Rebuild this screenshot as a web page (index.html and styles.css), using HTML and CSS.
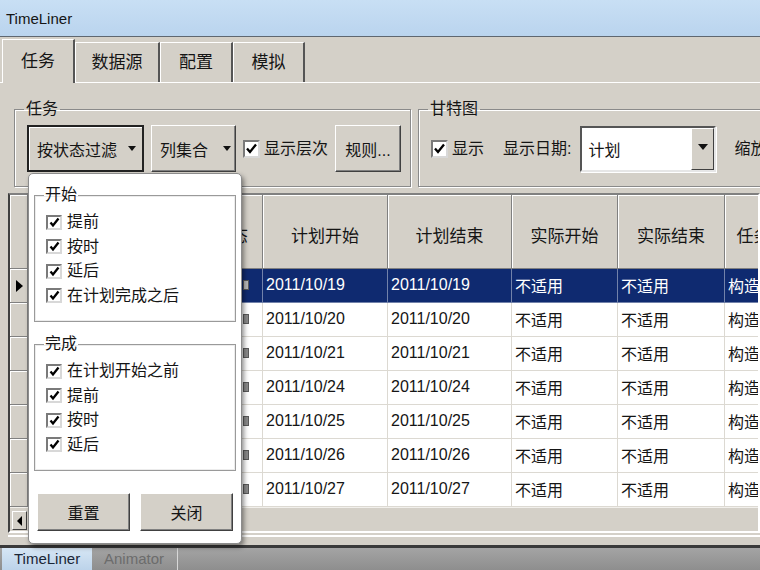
FILE: index.html
```html
<!DOCTYPE html>
<html lang="zh-CN">
<head>
  <meta charset="UTF-8">
  <title>TimeLiner</title>
  <link rel="stylesheet" href="styles.css">
</head>
<body>
<div class="app">
  <div class="titlebar">TimeLiner</div>

  <div class="window">
    <div class="tabs">
      <div class="tab active">任务</div>
      <div class="tab w85">数据源</div>
      <div class="tab">配置</div>
      <div class="tab w72">模拟</div>
    </div>

    <div class="page">
      <div class="toolbar">
        <fieldset class="group group-task">
          <legend>任务</legend>
          <button class="btn btn-filter pressed">按状态过滤<span class="arrow"></span></button>
          <button class="btn btn-columns">列集合<span class="arrow"></span></button>
          <label class="check big"><span class="box"><svg viewBox="0 0 13 13"><path d="M2 6.5 L5 10 L11 2.5"/></svg></span>显示层次</label>
          <button class="btn btn-rules">规则...</button>
        </fieldset>
        <fieldset class="group group-gantt">
          <legend>甘特图</legend>
          <label class="check big"><span class="box"><svg viewBox="0 0 13 13"><path d="M2 6.5 L5 10 L11 2.5"/></svg></span>显示</label>
          <span class="field-label">显示日期:</span>
          <div class="select">计划<span class="select-btn"><span class="arrow"></span></span></div>
          <span class="field-label zoom">缩放</span>
        </fieldset>
      </div>

      <div class="grid">
        <div class="row head">
          <div class="sel"></div>
          <div class="cell">名称</div>
          <div class="cell">状态</div>
          <div class="cell">计划开始</div>
          <div class="cell">计划结束</div>
          <div class="cell">实际开始</div>
          <div class="cell">实际结束</div>
          <div class="cell">任务类型</div>
        </div>
        <div class="row selected">
          <div class="sel"><span class="pointer"></span></div>
          <div class="cell">基础 1</div>
          <div class="cell status"><span class="icon"></span></div>
          <div class="cell">2011/10/19</div>
          <div class="cell">2011/10/19</div>
          <div class="cell">不适用</div>
          <div class="cell">不适用</div>
          <div class="cell">构造</div>
        </div>
        <div class="row">
          <div class="sel"></div>
          <div class="cell">基础 2</div>
          <div class="cell status"><span class="icon"></span></div>
          <div class="cell">2011/10/20</div>
          <div class="cell">2011/10/20</div>
          <div class="cell">不适用</div>
          <div class="cell">不适用</div>
          <div class="cell">构造</div>
        </div>
        <div class="row">
          <div class="sel"></div>
          <div class="cell">一层 1</div>
          <div class="cell status"><span class="icon"></span></div>
          <div class="cell">2011/10/21</div>
          <div class="cell">2011/10/21</div>
          <div class="cell">不适用</div>
          <div class="cell">不适用</div>
          <div class="cell">构造</div>
        </div>
        <div class="row">
          <div class="sel"></div>
          <div class="cell">一层 2</div>
          <div class="cell status"><span class="icon"></span></div>
          <div class="cell">2011/10/24</div>
          <div class="cell">2011/10/24</div>
          <div class="cell">不适用</div>
          <div class="cell">不适用</div>
          <div class="cell">构造</div>
        </div>
        <div class="row">
          <div class="sel"></div>
          <div class="cell">二层 1</div>
          <div class="cell status"><span class="icon"></span></div>
          <div class="cell">2011/10/25</div>
          <div class="cell">2011/10/25</div>
          <div class="cell">不适用</div>
          <div class="cell">不适用</div>
          <div class="cell">构造</div>
        </div>
        <div class="row">
          <div class="sel"></div>
          <div class="cell">二层 2</div>
          <div class="cell status"><span class="icon"></span></div>
          <div class="cell">2011/10/26</div>
          <div class="cell">2011/10/26</div>
          <div class="cell">不适用</div>
          <div class="cell">不适用</div>
          <div class="cell">构造</div>
        </div>
        <div class="row">
          <div class="sel"></div>
          <div class="cell">屋顶</div>
          <div class="cell status"><span class="icon"></span></div>
          <div class="cell">2011/10/27</div>
          <div class="cell">2011/10/27</div>
          <div class="cell">不适用</div>
          <div class="cell">不适用</div>
          <div class="cell">构造</div>
        </div>
        <div class="hscroll"><span class="scroll-left"><span class="arrow-left"></span></span></div>
      </div>
      <div class="sep"></div>
    </div>
  </div>

  <div class="dock">
    <div class="dock-tab active">TimeLiner</div>
    <div class="dock-tab">Animator</div>
  </div>

  <div class="popup">
    <fieldset class="pgroup">
      <legend>开始</legend>
      <label class="check"><span class="box"><svg viewBox="0 0 11 11"><path d="M1.5 5.5 L4 8.5 L9.5 1.5"/></svg></span>提前</label>
      <label class="check"><span class="box"><svg viewBox="0 0 11 11"><path d="M1.5 5.5 L4 8.5 L9.5 1.5"/></svg></span>按时</label>
      <label class="check"><span class="box"><svg viewBox="0 0 11 11"><path d="M1.5 5.5 L4 8.5 L9.5 1.5"/></svg></span>延后</label>
      <label class="check"><span class="box"><svg viewBox="0 0 11 11"><path d="M1.5 5.5 L4 8.5 L9.5 1.5"/></svg></span>在计划完成之后</label>
    </fieldset>
    <fieldset class="pgroup second">
      <legend>完成</legend>
      <label class="check"><span class="box"><svg viewBox="0 0 11 11"><path d="M1.5 5.5 L4 8.5 L9.5 1.5"/></svg></span>在计划开始之前</label>
      <label class="check"><span class="box"><svg viewBox="0 0 11 11"><path d="M1.5 5.5 L4 8.5 L9.5 1.5"/></svg></span>提前</label>
      <label class="check"><span class="box"><svg viewBox="0 0 11 11"><path d="M1.5 5.5 L4 8.5 L9.5 1.5"/></svg></span>按时</label>
      <label class="check"><span class="box"><svg viewBox="0 0 11 11"><path d="M1.5 5.5 L4 8.5 L9.5 1.5"/></svg></span>延后</label>
    </fieldset>
    <div class="popup-buttons">
      <button class="btn pbtn">重置</button>
      <button class="btn pbtn">关闭</button>
    </div>
  </div>
</div>
</body>
</html>
```

FILE: styles.css
```css
* { box-sizing: border-box; }
body { margin: 0; font-family: "Liberation Sans", "Noto Sans CJK SC", sans-serif; color: #151515; }
.app { position: relative; width: 760px; height: 570px; overflow: hidden; display: flex; flex-direction: column; background: #d4d0c8; }

.titlebar { height: 37px; flex: none; padding-left: 6px; display: flex; align-items: center; font-size: 15px; background: linear-gradient(#c8dff4, #bad4ee); border-bottom: 1px solid #5f6770; }

.window { flex: 1; min-height: 0; display: flex; flex-direction: column; border-bottom: 3px solid #3a3a3a; }

.tabs { height: 46px; flex: none; display: flex; align-items: flex-end; padding-left: 2px; border-bottom: 1px solid #fff; }
.tab { width: 73px; height: 40px; display: flex; align-items: center; justify-content: center; font-size: 17px; line-height: 18px; border-top: 1px solid #fff; border-left: 1px solid #fff; border-right: 2px solid #555; }
.tab.w85 { width: 85px; }
.tab.w72 { width: 72px; }
.tab.active { height: 44px; margin-bottom: -1px; background: #d4d0c8; position: relative; }

.page { flex: 1; min-height: 0; padding-left: 8px; display: flex; flex-direction: column; }
.toolbar { display: flex; gap: 7px; margin: 17px 0 0 6px; flex: none; }

.group { margin: 0; padding: 7px 10px 14px 12px; border: 1px solid #8a8a8a; box-shadow: inset 1px 1px #fff, 1px 1px #fff; display: flex; align-items: center; min-width: 0; }
.group legend, .pgroup legend { font-size: 16px; line-height: 18px; padding: 0 2px; margin-left: -3px; }
.group-task { width: 397px; flex: none; gap: 7px; }
.group-gantt { width: 420px; flex: none; }
.group > * { flex: none; white-space: nowrap; }

.btn { font: inherit; font-size: 16px; height: 47px; background: #d4d0c8; color: #151515; border: 1px solid; border-color: #fff #404040 #404040 #fff; box-shadow: inset -1px -1px #808080; padding: 0; display: flex; align-items: center; justify-content: center; }
.btn.pressed { border: 2px solid #222; box-shadow: inset 1px 1px #fff; }
.btn-filter { width: 117px; justify-content: flex-start; padding-left: 8px; }
.btn-columns { width: 85px; justify-content: flex-start; padding-left: 8px; }
.btn-filter .arrow { margin-left: 11px; }
.btn-columns .arrow { margin-left: 15px; }
.btn-rules { width: 66px; }
.arrow { width: 0; height: 0; border-left: 4px solid transparent; border-right: 4px solid transparent; border-top: 5px solid #111; }

.check { display: flex; align-items: center; gap: 5px; font-size: 16px; line-height: 18px; white-space: nowrap; }
.check .box { width: 16px; height: 15px; background: #fff; border: 2px solid; border-color: #7a7a7a #d8d8d8 #d8d8d8 #7a7a7a; display: flex; align-items: center; justify-content: center; }
.check.big { gap: 4px; }
.check.big .box { width: 17px; height: 18px; }
.check svg { width: 11px; height: 11px; }
.check.big svg { width: 13px; height: 13px; }
.check path { fill: none; stroke: #000; stroke-width: 2.3; }

.field-label { font-size: 16px; line-height: 18px; margin-left: 19px; }
.field-label.zoom { margin-left: 18px; }
.select { width: 136px; height: 46px; margin-left: 9px; background: #fff; border: 2px solid; border-color: #555 #e6e6e6 #e6e6e6 #555; box-shadow: 1px 1px #fff; display: flex; align-items: center; justify-content: space-between; padding-left: 6px; font-size: 16px; }
.select-btn { width: 23px; height: 100%; background: #d4d0c8; border: 1px solid; border-color: #fff #404040 #404040 #fff; display: flex; justify-content: center; padding-top: 15px; }
.select-btn .arrow { border-left-width: 5px; border-right-width: 5px; border-top-width: 6px; }

.grid { margin-top: 6px; height: 340px; flex: none; border: 2px solid; border-color: #808080 #fff #fff #404040; box-shadow: inset 0 1px #404040; overflow: hidden; background: #d4d0c8; }
.row { display: grid; grid-template-columns: 18px 172px 63px 125px 124px 106px 107px 92px; height: 34px; }
.row .cell { background: #fff; border-right: 1px solid #dcd9d2; border-bottom: 1px solid #dcd9d2; padding: 0 0 1px 3px; display: flex; align-items: center; font-size: 16px; white-space: nowrap; overflow: hidden; }
.row .sel { background: #d4d0c8; border-right: 1px solid #808080; border-bottom: 1px solid #808080; box-shadow: inset 1px 1px #fff; display: flex; align-items: center; justify-content: center; }
.row.head { height: 74px; }
.row.head .cell { background: #d4d0c8; border-right: 1px solid #808080; border-bottom: 1px solid #808080; box-shadow: inset 1px 1px #fff; justify-content: center; padding: 5px 0 0 0; font-size: 17px; }
.row.selected .cell { background: #0f2a70; color: #fff; border-right-color: #7282aa; border-bottom-color: #7282aa; }
.pointer { width: 0; height: 0; border-top: 6px solid transparent; border-bottom: 6px solid transparent; border-left: 7px solid #000; margin-left: 2px; }
.row .cell.status { padding-left: 43px; }
.icon { width: 6px; height: 10px; background: #8a8a8a; border: 1px solid #5a5a5a; }
.row.selected .icon { background: #b8b8b8; }

.hscroll { height: 24px; border-top: 1px solid #f2f0ec; padding: 3px 0 0 2px; }
.scroll-left { width: 15px; height: 19px; display: flex; align-items: center; justify-content: center; background: #d4d0c8; border: 1px solid; border-color: #fff #404040 #404040 #fff; }
.arrow-left { width: 0; height: 0; border-top: 5px solid transparent; border-bottom: 5px solid transparent; border-right: 5px solid #000; }

.sep { height: 2px; margin-top: 2px; background: #fff; flex: none; }

.dock { height: 22px; flex: none; display: flex; background: linear-gradient(#a4a4a4, #8e8e8e); }
.dock-tab { font-size: 15px; line-height: 22px; padding-left: 10px; width: 84px; color: #6c6c6c; border-right: 1px solid #d8d8d8; }
.dock-tab.active { width: 90px; margin: 0 2px 0 2px; padding-left: 12px; color: #1a2636; border-right: none; background: linear-gradient(#d6e6f5, #bcd3ea); }

.popup { position: absolute; left: 28px; top: 173px; width: 214px; height: 371px; background: #fff; border: 1px solid #8c8c8c; border-radius: 5px; box-shadow: 2px 3px 5px rgba(0, 0, 0, 0.45); padding: 12px 5px 0 5px; }
.pgroup { margin: 0; padding: 6px 8px 13px 11px; border: 1px solid #9a9a9a; box-shadow: inset 0 0 0 1px #ececec; }
.pgroup legend { margin-left: -2px; padding: 0 1px; }
.pgroup.second { margin-top: 13px; }
.pgroup .check { height: 24.5px; }
.popup-buttons { display: flex; gap: 10px; margin: 22px 0 0 3px; }
.pbtn { width: 93px; height: 38px; }
```
